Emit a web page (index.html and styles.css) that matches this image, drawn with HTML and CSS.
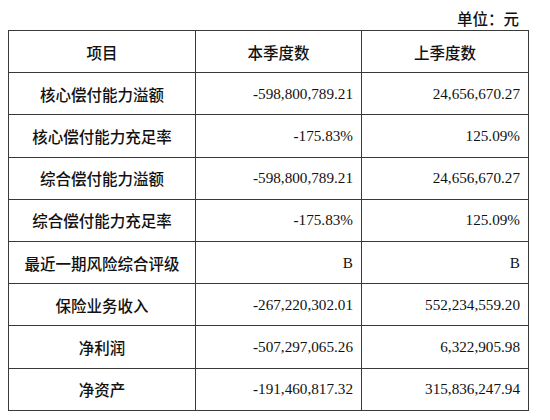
FILE: index.html
```html
<!DOCTYPE html>
<html lang="zh-CN">
<head>
<meta charset="utf-8">
<link rel="stylesheet" href="styles.css">
</head>
<body>
<div class="page">
  <div class="unit">单位：元</div>
  <table class="report">
    <colgroup>
      <col class="c1"><col class="c2"><col class="c3">
    </colgroup>
    <thead>
      <tr><th>项目</th><th>本季度数</th><th>上季度数</th></tr>
    </thead>
    <tbody>
      <tr><td class="label">核心偿付能力溢额</td><td class="num">-598,800,789.21</td><td class="num">24,656,670.27</td></tr>
      <tr><td class="label">核心偿付能力充足率</td><td class="num">-175.83%</td><td class="num">125.09%</td></tr>
      <tr><td class="label">综合偿付能力溢额</td><td class="num">-598,800,789.21</td><td class="num">24,656,670.27</td></tr>
      <tr><td class="label">综合偿付能力充足率</td><td class="num">-175.83%</td><td class="num">125.09%</td></tr>
      <tr><td class="label">最近一期风险综合评级</td><td class="num">B</td><td class="num">B</td></tr>
      <tr><td class="label">保险业务收入</td><td class="num">-267,220,302.01</td><td class="num">552,234,559.20</td></tr>
      <tr><td class="label">净利润</td><td class="num">-507,297,065.26</td><td class="num">6,322,905.98</td></tr>
      <tr><td class="label">净资产</td><td class="num">-191,460,817.32</td><td class="num">315,836,247.94</td></tr>
    </tbody>
  </table>
</div>
</body>
</html>
```
FILE: styles.css
```css
html, body {
  margin: 0;
  padding: 0;
  background: #ffffff;
}
.page {
  width: 550px;
  height: 420px;
  padding: 0 0 0 8px;
  box-sizing: border-box;
  color: #111;
}
.unit {
  width: 519px;
  height: 30px;
  box-sizing: border-box;
  padding: 8px 8px 0 0;
  text-align: right;
  font-family: "Noto Sans CJK SC", sans-serif;
  font-size: 15.5px;
  font-weight: 500;
  line-height: 20px;
}
.report {
  width: 520px;
  border-collapse: collapse;
  table-layout: fixed;
}
.c1 { width: 187px; }
.c2 { width: 166px; }
.c3 { width: 167px; }
.report th, .report td {
  border: 1px solid #3a3a3a;
  height: 42.2px;
  padding: 0 8px;
  box-sizing: border-box;
  vertical-align: middle;
}
.report th, .report td.label {
  font-family: "Noto Sans CJK SC", sans-serif;
  font-size: 15.5px;
  font-weight: 500;
  text-align: center;
  line-height: 20px;
}
.report td.num {
  font-family: "Liberation Serif", "Times New Roman", serif;
  font-size: 15.2px;
  text-align: right;
  line-height: 20px;
}
```
